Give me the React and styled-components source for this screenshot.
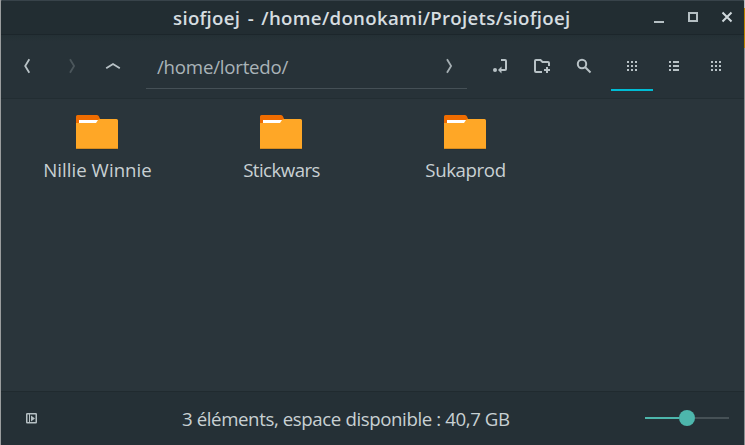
import React from "react";
import styled, { createGlobalStyle } from "styled-components";

const GlobalStyle = createGlobalStyle`
  * { box-sizing: border-box; }
  html, body { margin: 0; padding: 0; background: #8c9092; overflow: hidden; }
  svg { display: block; flex: none; }
`;

const Desktop = styled.div`
  width: 745px;
  height: 445px;
  padding: 0 1px;
  background:
    linear-gradient(#b9bcbd 0 8px, #ba8500 8px 48px, #8a8e90 48px) right / 1px 100% no-repeat,
    #9a9d9e;
`;

const Window = styled.main`
  display: flex;
  flex-direction: column;
  width: 743px;
  height: 445px;
  overflow: hidden;
  border-radius: 2px 2px 0 0;
  background: #2a353b;
  color: #c8d0d3;
  font-family: "Open Sans", "Noto Sans", sans-serif;
  font-size: 18.67px;
  line-height: 26px;
`;

const TitleBar = styled.header`
  display: flex;
  align-items: center;
  height: 35px;
  flex: none;
  background: #222d32;
  border-top: 1px solid #38434a;
  border-bottom: 1px solid #1c262b;
`;

const Title = styled.h1`
  margin: 0 0 0 172px;
  width: 398px;
  font-size: 18.67px;
  font-weight: 600;
  line-height: 26px;
  letter-spacing: 0.3px;
  word-spacing: 2.2px;
  color: #d6dde0;
  white-space: nowrap;
`;

const WindowControls = styled.div`
  display: flex;
  gap: 14px;
  margin-left: 78px;
`;

const Toolbar = styled.nav`
  display: flex;
  height: 64px;
  flex: none;
  padding-left: 5px;
  background: linear-gradient(#243035, #273238 6px);
  border-bottom: 1px solid #222d32;
`;

const ToolButton = styled.button`
  display: flex;
  align-items: center;
  justify-content: center;
  width: ${({ $width }) => $width || 42}px;
  height: 56px;
  padding: 8px 0 0;
  border: 0;
  border-bottom: 2px solid ${({ $active }) => ($active ? "#00bcd4" : "transparent")};
  background: none;
  color: ${({ $dim }) => ($dim ? "#4b565b" : "#b8c2c6")};
`;

const ViewGroup = styled.div`
  display: flex;
  margin-left: 6px;
`;

const PathEntry = styled.div`
  display: flex;
  align-items: center;
  justify-content: space-between;
  width: 321px;
  height: 54px;
  margin: 0 12px 0 16px;
  padding: 10px 8px 0 11px;
  border-bottom: 1px solid #455056;
  letter-spacing: -0.22px;
  color: #aab4b8;
`;

const EntryIcon = styled.span`
  padding-bottom: 2px;
  color: #a4aeb2;
`;

const Files = styled.section`
  display: flex;
  flex: 1;
  align-items: flex-start;
  padding: 16px 0 0 4px;
`;

const FileItem = styled.div`
  display: flex;
  flex-direction: column;
  align-items: center;
  width: 184px;
  gap: 7px;
`;

const FileName = styled.span`
  white-space: nowrap;
  padding-left: 1px;
  letter-spacing: ${({ $track }) => $track || 0}px;
`;

const StatusBar = styled.footer`
  display: flex;
  align-items: center;
  height: 54px;
  flex: none;
  padding: 0 15px 1px 24px;
  background: #253036;
  border-top: 1px solid #202a2f;
`;

const StatusText = styled.p`
  margin: 1px 0 0 143px;
  width: 329px;
  letter-spacing: -0.4px;
  white-space: nowrap;
`;

const Slider = styled.div`
  display: flex;
  align-items: center;
  width: 84px;
  height: 16px;
  margin-left: auto;
`;

const Track = styled.div`
  width: 34px;
  height: 2px;
  background: ${({ $filled }) => ($filled ? "#4db6ac" : "#465156")};
`;

const Knob = styled.div`
  width: 16px;
  height: 16px;
  border-radius: 50%;
  background: #4db6ac;
`;

const Glyph = ({ children, size = 20 }) => (
  <svg width={size} height={size} viewBox={`0 0 ${size} ${size}`} fill="none" stroke="currentColor" strokeWidth="2">
    {children}
  </svg>
);

const LeftIcon = () => <Glyph><path d="M12.3 3.2 8.2 10l4.1 6.8" strokeWidth="1.8" /></Glyph>;
const RightIcon = () => <Glyph><path d="M8 3.2 12.1 10 8 16.8" strokeWidth="1.8" /></Glyph>;
const UpIcon = () => <Glyph><path d="M3.2 12.3 10 8l6.8 4.3" strokeWidth="1.9" /></Glyph>;

const EnterIcon = () => (
  <Glyph>
    <path d="M11 4h4q1 0 1 1v8q0 1-1 1H9.5" />
    <path d="M11.5 10.5v7L8 14z" fill="currentColor" stroke="none" />
    <circle cx="5" cy="14" r="2" fill="currentColor" stroke="none" />
  </Glyph>
);

const NewFolderIcon = () => (
  <Glyph>
    <path d="M10 16H4q-1 0-1-1V5q0-1 1-1h4.5l2 2H16q1 0 1 1v3" />
    <path d="M15 11v6M12 14h6" />
  </Glyph>
);

const SearchIcon = () => (
  <Glyph>
    <circle cx="8" cy="8" r="4.2" />
    <path d="m11 11 5.5 5.5" />
  </Glyph>
);

const GridIcon = () => (
  <Glyph>
    <path d="M5 6h2m2 0h2m2 0h2M5 10h2m2 0h2m2 0h2M5 14h2m2 0h2m2 0h2" />
  </Glyph>
);

const ListIcon = () => (
  <Glyph>
    <path d="M5 6h2m2 0h6M5 10h2m2 0h6M5 14h2m2 0h6" />
  </Glyph>
);

const ControlButton = styled.button`
  padding: 0;
  border: 0;
  background: none;
  color: ${({ $bright }) => ($bright ? "#cfd8dc" : "#b5bfc3")};
`;

const SidebarButton = styled(ControlButton)`
  width: 14px;
`;

const SidebarIcon = () => (
  <Glyph size={14}>
    <rect x="1.75" y="2.75" width="9.5" height="9" rx="0.5" strokeWidth="1.5" />
    <path d="M4.5 2.5v9" strokeWidth="1" />
    <path d="M6 4.5v6l4-3z" fill="currentColor" stroke="none" />
  </Glyph>
);

const FolderIcon = () => (
  <svg width="42" height="35" viewBox="0 0 42 35">
    <path d="M1.5 0H21q1.4 0 2 1.5L24.5 5v5H0V1.5Q0 0 1.5 0" fill="#ef6c00" />
    <path d="M3 5h20v5H3z" fill="#fff" />
    <path d="M0 8h20l2-3q.6-1 2-1h16.5Q42 4 42 5.5V34H0z" fill="#ffa726" />
    <path d="M0 33h42v1H0z" fill="#d88c20" />
    <path d="M1 34h40v1H1z" fill="#253036" />
  </svg>
);

const folders = [
  { name: "Nillie Winnie", track: 0.04 },
  { name: "Stickwars", track: -0.55 },
  { name: "Sukaprod", track: -0.4 },
];

export default function App() {
  return (
    <>
      <GlobalStyle />
      <Desktop>
        <Window>
          <TitleBar>
            <Title>siofjoej - /home/donokami/Projets/siofjoej</Title>
            <WindowControls>
              <ControlButton aria-label="Minimize"><Glyph><path d="M5 14h10" /></Glyph></ControlButton>
              <ControlButton aria-label="Maximize"><Glyph><path d="M6 5h8v8H6z" /></Glyph></ControlButton>
              <ControlButton $bright aria-label="Close"><Glyph><path d="m5.5 4.5 9 9m0-9-9 9" /></Glyph></ControlButton>
            </WindowControls>
          </TitleBar>
          <Toolbar>
            <ToolButton aria-label="Back"><LeftIcon /></ToolButton>
            <ToolButton $dim $width={48} aria-label="Forward"><RightIcon /></ToolButton>
            <ToolButton $width={34} aria-label="Up"><UpIcon /></ToolButton>
            <PathEntry>
              <span>/home/lortedo/</span>
              <EntryIcon><RightIcon /></EntryIcon>
            </PathEntry>
            <ToolButton aria-label="Go to path"><EnterIcon /></ToolButton>
            <ToolButton aria-label="New folder"><NewFolderIcon /></ToolButton>
            <ToolButton aria-label="Search"><SearchIcon /></ToolButton>
            <ViewGroup>
              <ToolButton $active aria-label="Icon view"><GridIcon /></ToolButton>
              <ToolButton aria-label="List view"><ListIcon /></ToolButton>
              <ToolButton aria-label="Compact view"><GridIcon /></ToolButton>
            </ViewGroup>
          </Toolbar>
          <Files>
            {folders.map(({ name, track }) => (
              <FileItem key={name}>
                <FolderIcon />
                <FileName $track={track}>{name}</FileName>
              </FileItem>
            ))}
          </Files>
          <StatusBar>
            <SidebarButton aria-label="Toggle sidebar"><SidebarIcon /></SidebarButton>
            <StatusText>3 éléments, espace disponible : 40,7 GB</StatusText>
            <Slider>
              <Track $filled />
              <Knob />
              <Track />
            </Slider>
          </StatusBar>
        </Window>
      </Desktop>
    </>
  );
}
